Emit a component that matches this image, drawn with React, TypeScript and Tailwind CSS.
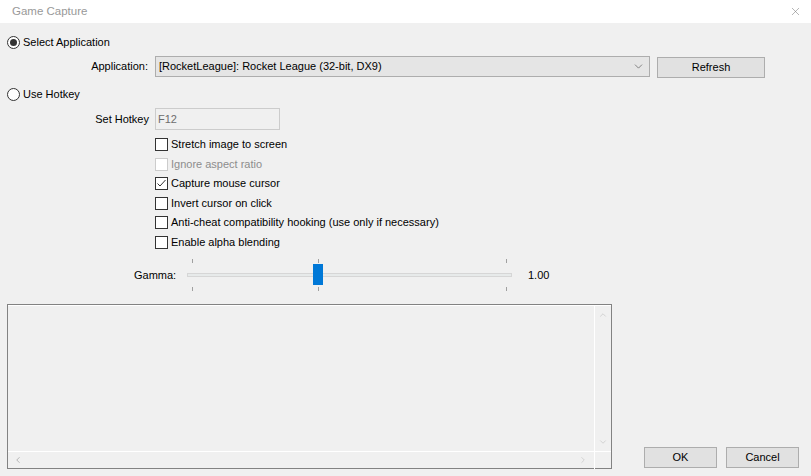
import { X, ChevronDown, ChevronUp, ChevronLeft, ChevronRight } from "lucide-react";

const FONT = { fontFamily: '"Liberation Sans", "Noto Sans", sans-serif' };

function Radio({ checked, label }: { checked?: boolean; label: string }) {
  return (
    <div className="flex h-[18px] items-center">
      <span className="flex h-[13px] w-[13px] items-center justify-center rounded-full border border-[#333333] bg-white">
        {checked && <span className="h-[7px] w-[7px] rounded-full bg-[#333333]" />}
      </span>
      <span className="ml-[3px] text-black">{label}</span>
    </div>
  );
}

function Check({ label, checked, disabled }: { label: string; checked?: boolean; disabled?: boolean }) {
  return (
    <div className="flex h-[19.5px] items-center">
      <span
        className={`flex h-[13px] w-[13px] items-center justify-center border bg-white ${
          disabled ? "border-[#cccccc]" : "border-[#333333]"
        }`}
      >
        {checked && (
          <svg width="11" height="11" viewBox="0 0 11 11">
            <path d="M1.5 5.5 L4 8 L9.5 2" fill="none" stroke="#333" strokeWidth="1" />
          </svg>
        )}
      </span>
      <span className={`ml-[3px] ${disabled ? "text-[#8d8d8d]" : "text-black"}`}>{label}</span>
    </div>
  );
}

function Button({ label, className = "" }: { label: string; className?: string }) {
  return (
    <div
      className={`flex items-center justify-center border border-[#adadad] bg-[#e1e1e1] text-black ${className}`}
    >
      {label}
    </div>
  );
}

export default function App() {
  return (
    <div
      className="flex h-[476px] w-[811px] flex-col overflow-hidden bg-[#f0f0f0] text-[11px] leading-none text-black"
      style={FONT}
    >
      {/* title bar */}
      <div className="flex h-[23px] shrink-0 items-center justify-between bg-white pl-[12px] pr-[9px]">
        <span className="text-[11.5px] text-[#999999]">Game Capture</span>
        <X size={13} strokeWidth={1} className="text-[#777777]" />
      </div>

      <div className="flex flex-1 flex-col px-[7px] pt-[10px]">
        <Radio checked label="Select Application" />

        <div className="mt-[5px] flex h-[21px] items-start">
          <span className="flex h-[21px] w-[141px] items-center justify-end">Application:</span>
          <div className="ml-[7px] flex h-[21px] w-[495px] items-center justify-between border border-[#adadad] bg-[#e5e5e5] pl-[3px] pr-[4px]">
            <span>[RocketLeague]: Rocket League (32-bit, DX9)</span>
            <ChevronDown size={13} strokeWidth={1.25} className="text-[#555555]" />
          </div>
          <Button label="Refresh" className="ml-[7px] mt-px h-[21px] w-[108px]" />
        </div>

        <div className="mt-[8px]">
          <Radio label="Use Hotkey" />
        </div>

        <div className="mt-[5px] flex h-[22px] items-center">
          <span className="flex w-[142px] justify-end">Set Hotkey</span>
          <div className="ml-[6px] flex h-[22px] w-[125px] items-center border border-[#cccccc] bg-[#f0f0f0] pl-[2px] text-[#6d6d6d]">
            F12
          </div>
        </div>

        <div className="ml-[148px] mt-[5px] flex flex-col">
          <Check label="Stretch image to screen" />
          <Check label="Ignore aspect ratio" disabled />
          <Check label="Capture mouse cursor" checked />
          <Check label="Invert cursor on click" />
          <Check label="Anti-cheat compatibility hooking (use only if necessary)" />
          <Check label="Enable alpha blending" />
        </div>

        {/* gamma */}
        <div className="mt-[4px] flex h-[38px] items-center">
          <span className="ml-[127px] w-[53px]">Gamma:</span>
          <div className="relative h-[38px] w-[325px]">
            <div className="absolute left-0 right-0 top-[17px] h-[4px] border border-[#d6d6d6] bg-[#e7eaea]" />
            <span className="absolute left-[5px] top-[3px] h-[4px] w-px bg-[#a0a0a0]" />
            <span className="absolute left-[131px] top-[3px] h-[4px] w-px bg-[#a0a0a0]" />
            <span className="absolute left-[319px] top-[3px] h-[4px] w-px bg-[#a0a0a0]" />
            <span className="absolute left-[5px] top-[31px] h-[4px] w-px bg-[#a0a0a0]" />
            <span className="absolute left-[131px] top-[31px] h-[4px] w-px bg-[#a0a0a0]" />
            <span className="absolute left-[319px] top-[31px] h-[4px] w-px bg-[#a0a0a0]" />
            <div className="absolute left-[126px] top-[8px] h-[21px] w-[10px] bg-[#0078d7]" />
          </div>
          <span className="ml-[16px]">1.00</span>
        </div>

        {/* bottom */}
        <div className="mt-[10px] flex items-end">
          <div className="flex h-[165px] w-[605px] flex-col border border-[#828282]">
            <div className="flex flex-1 border-t border-white">
              <div className="flex-1" />
              <div className="flex w-[17px] flex-col items-center justify-between border-l border-white py-[4px]">
                <ChevronUp size={10} strokeWidth={1.5} className="text-[#c0c0c0]" />
                <ChevronDown size={10} strokeWidth={1.5} className="text-[#c0c0c0]" />
              </div>
            </div>
            <div className="flex h-[17px] items-center border-t border-white">
              <div className="flex flex-1 items-center justify-between pl-[5px] pr-[6px]">
                <ChevronLeft size={10} strokeWidth={2} className="text-[#a8a8a8]" />
                <ChevronRight size={10} strokeWidth={1.5} className="text-[#c0c0c0]" />
              </div>
              <div className="h-[17px] w-[17px] border-l border-white" />
            </div>
          </div>
          <div className="mb-px ml-[32px] flex gap-[9px]">
            <Button label="OK" className="h-[21px] w-[73px]" />
            <Button label="Cancel" className="h-[21px] w-[73px]" />
          </div>
        </div>
      </div>
    </div>
  );
}
